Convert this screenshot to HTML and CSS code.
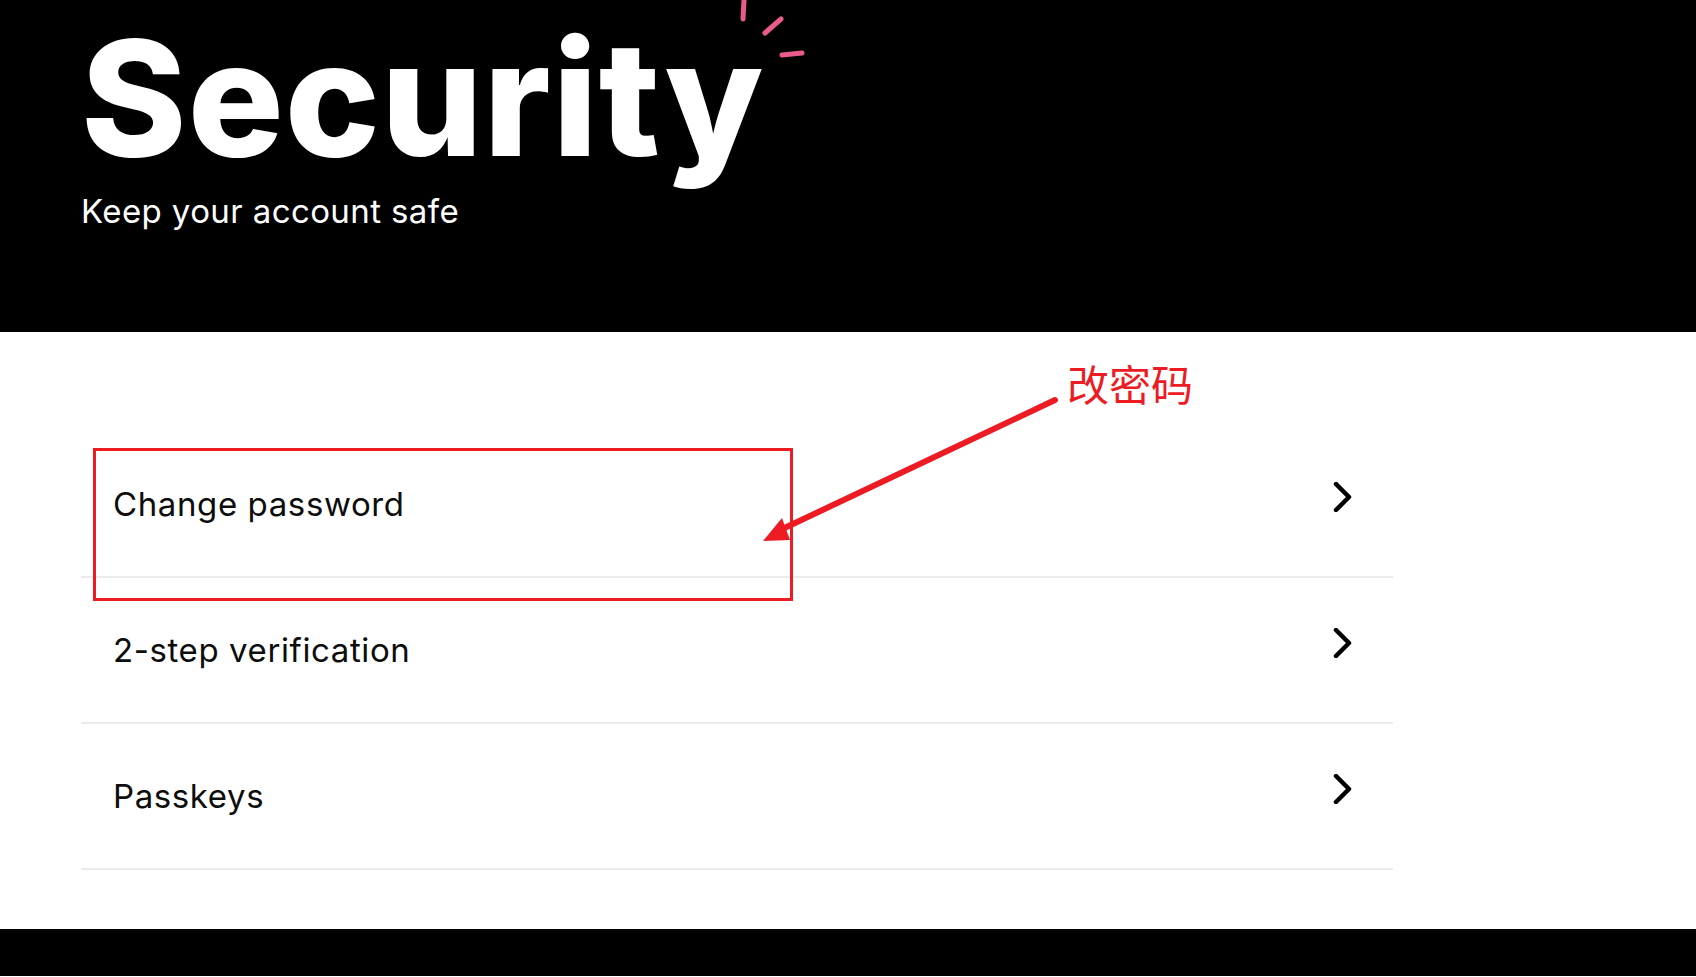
FILE: index.html
```html
<!DOCTYPE html>
<html lang="en">
<head>
<meta charset="utf-8">
<title>Security</title>
<link rel="stylesheet" href="styles.css">
</head>
<body>
<header class="hero">
  <div class="hero-title-wrap">
    <h1 class="hero-title">Security</h1>
    <svg class="sparkle" width="70" height="60" viewBox="0 0 70 60" aria-hidden="true">
      <line x1="15" y1="0" x2="14" y2="19" />
      <line x1="52" y1="19" x2="36" y2="33" />
      <line x1="53" y1="55" x2="73" y2="53" />
    </svg>
  </div>
  <p class="hero-sub">Keep your account safe</p>
</header>
<main class="content">
  <ul class="menu">
    <li class="menu-item"><span class="menu-label">Change password</span><svg class="chev" width="20" height="30" viewBox="0 0 20 30"><path d="M3 2 L16 15 L3 28" /></svg></li>
    <li class="menu-item"><span class="menu-label">2-step verification</span><svg class="chev" width="20" height="30" viewBox="0 0 20 30"><path d="M3 2 L16 15 L3 28" /></svg></li>
    <li class="menu-item"><span class="menu-label">Passkeys</span><svg class="chev" width="20" height="30" viewBox="0 0 20 30"><path d="M3 2 L16 15 L3 28" /></svg></li>
  </ul>
</main>
<footer class="footer"></footer>

<div class="annot-box"></div>
<svg class="annot-arrow" width="1696" height="977" viewBox="0 0 1696 977" aria-hidden="true">
  <line x1="1055" y1="400" x2="776" y2="532" class="shaft" />
  <polygon points="763,541 782,518 790,540" class="head" />
</svg>
<span class="annot-text">改密码</span>
</body>
</html>
```
FILE: styles.css
```css
html, body {
  margin: 0;
  padding: 0;
  background: #ffffff;
}
body {
  position: relative;
  width: 1696px;
  height: 977px;
  overflow: hidden;
  font-family: "Inter", "Liberation Sans", sans-serif;
}
.hero {
  background: #000;
  height: 332px;
  box-sizing: border-box;
  padding: 18px 0 0 81px;
  display: flex;
  flex-direction: column;
}
.hero-title-wrap {
  position: relative;
  align-self: flex-start;
}
.hero-title {
  margin: 0;
  color: #fff;
  font-family: "Inter", sans-serif;
  font-weight: 800;
  font-size: 160px;
  line-height: 1;
  letter-spacing: 1px;
}
.sparkle {
  position: absolute;
  left: 648px;
  top: -18px;
  overflow: visible;
}
.sparkle line {
  stroke: #e95a8d;
  stroke-width: 5;
  stroke-linecap: round;
}
.hero-sub {
  margin: 17px 0 0 0;
  color: #fff;
  font-size: 33px;
  line-height: 1;
  font-weight: 400;
  letter-spacing: 0.4px;
}
.content {
  padding: 100px 303px 59px 81px;
}
.menu {
  list-style: none;
  margin: 0;
  padding: 0;
}
.menu-item {
  height: 144px;
  border-bottom: 2px solid #ebebeb;
  display: flex;
  align-items: center;
  justify-content: space-between;
  padding: 0 40px 0 32px;
}
.menu-label {
  font-size: 33px;
  letter-spacing: 0.6px;
  color: #0d0d0d;
}
.chev {
  margin-bottom: 14px;
}
.chev path {
  fill: none;
  stroke: #000;
  stroke-width: 4.5;
  stroke-linecap: round;
  stroke-linejoin: round;
}
.footer {
  background: #000;
  height: 47px;
}
.annot-box {
  position: absolute;
  left: 93px;
  top: 448px;
  width: 694px;
  height: 147px;
  border: 3px solid #ed1c24;
}
.annot-arrow {
  position: absolute;
  left: 0;
  top: 0;
}
.annot-arrow .shaft {
  stroke: #ed1c24;
  stroke-width: 6;
  stroke-linecap: round;
}
.annot-arrow .head {
  fill: #ed1c24;
}
.annot-text {
  position: absolute;
  left: 1067px;
  top: 358px;
  font-family: "Noto Sans CJK SC", sans-serif;
  font-size: 42px;
  line-height: 1.2;
  color: #ed1c24;
}
```
